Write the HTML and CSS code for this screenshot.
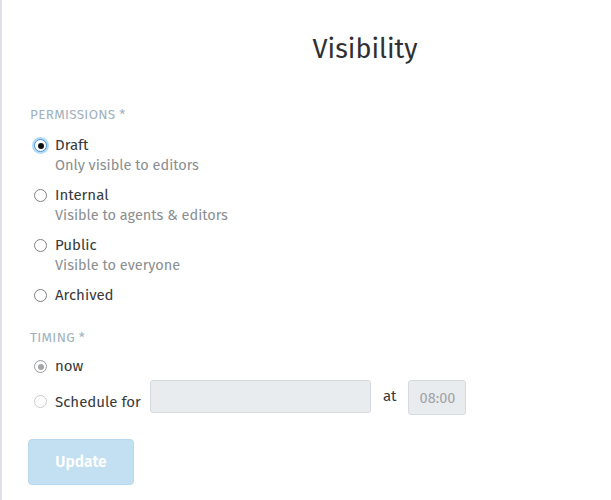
FILE: index.html
```html
<!DOCTYPE html>
<html lang="en">
<head>
  <meta charset="UTF-8" />
  <title>Visibility</title>
  <link rel="stylesheet" href="styles.css">
</head>
<body>
  <div class="modal">
    <h1 class="modal-title">Visibility</h1>

    <form class="form">
      <div class="group">
        <div class="group-label">Permissions *</div>

        <label class="option">
          <input type="radio" name="state" class="focused" checked />
          <span class="option-text">
            <span class="option-name">Draft</span>
            <span class="option-desc">Only visible to editors</span>
          </span>
        </label>

        <label class="option">
          <input type="radio" name="state" />
          <span class="option-text">
            <span class="option-name">Internal</span>
            <span class="option-desc">Visible to agents &amp; editors</span>
          </span>
        </label>

        <label class="option">
          <input type="radio" name="state" />
          <span class="option-text">
            <span class="option-name">Public</span>
            <span class="option-desc">Visible to everyone</span>
          </span>
        </label>

        <label class="option">
          <input type="radio" name="state" />
          <span class="option-text">
            <span class="option-name">Archived</span>
          </span>
        </label>
      </div>

      <div class="group">
        <div class="group-label">Timing *</div>

        <label class="option timing">
          <input type="radio" name="timing" checked disabled />
          <span class="option-name">now</span>
        </label>

        <div class="option schedule">
          <input type="radio" name="timing" disabled />
          <span class="option-name">Schedule for</span>
          <input type="text" class="date-input" disabled />
          <span class="at">at</span>
          <input type="text" class="time-input" value="08:00" disabled />
        </div>
      </div>

      <button type="submit" class="btn" disabled>Update</button>
    </form>
  </div>
</body>
</html>
```

FILE: styles.css
```css
body {
  margin: 0;
  font-family: 'Fira Sans', 'Open Sans', 'Noto Sans', sans-serif;
  color: #38393b;
  background-color: #fff;
}

.modal {
  min-height: 500px;
  box-sizing: border-box;
  border-left: 2px solid #dfe3e8;
  padding: 0 0 0 28px;
}

.modal-title {
  margin: 0;
  padding: 31px 0 0 145px;
  height: 49px;
  width: 380px;
  font-size: 27px;
  font-weight: 400;
  line-height: 36px;
  text-align: center;
  color: #2f3033;
}

.form {
  padding-top: 26px;
}

.group {
  margin-bottom: 24px;
}

.group-label {
  font-size: 13.5px;
  text-transform: uppercase;
  letter-spacing: 0.3px;
  color: #9fb1bd;
  line-height: 18px;
  margin-bottom: 11px;
}

.option {
  display: flex;
  align-items: flex-start;
  gap: 8px;
  padding-left: 4px;
  margin-bottom: 10px;
  font-size: 15px;
}

.option input[type="radio"] {
  appearance: none;
  -webkit-appearance: none;
  width: 13px;
  height: 13px;
  margin: 4px 0 0 0;
  flex-shrink: 0;
  box-sizing: border-box;
  border: 1px solid #7d7f82;
  border-radius: 50%;
  background-color: #fff;
  position: relative;
}

.option input[type="radio"]:checked::after {
  content: "";
  position: absolute;
  left: 2.5px;
  top: 2.5px;
  width: 6px;
  height: 6px;
  border-radius: 50%;
  background-color: #111;
}

.option input.focused {
  border-color: #4a90d9;
  box-shadow: 0 0 0 2px #b5dcf7;
}

.option input[type="radio"]:disabled {
  border-color: #c9cbcd;
}

.option input[type="radio"]:checked:disabled {
  border-color: #9c9ea0;
}

.option input[type="radio"]:checked:disabled::after {
  background-color: #a4a6a8;
}

.option-text {
  display: flex;
  flex-direction: column;
}

.option-name {
  line-height: 20px;
  color: #38393b;
}

.option-desc {
  font-size: 14.5px;
  line-height: 20px;
  color: #8a8e91;
}

.timing {
  margin-top: -2px;
  margin-bottom: 4px;
}

.schedule {
  gap: 0;
  margin-bottom: 0;
}

.schedule input[type="radio"] {
  margin-top: 15px;
}

.schedule .option-name {
  margin-left: 8px;
  padding-top: 12px;
  line-height: 21px;
}

.date-input,
.time-input {
  font-family: inherit;
  font-size: 14.5px;
  height: 33px;
  box-sizing: border-box;
  border: 1px solid #d6dadf;
  border-radius: 3px;
  background-color: #e9ecef;
  color: #a0a4a7;
}

.date-input {
  width: 221px;
  margin-left: 9px;
}

.at {
  margin: 0 12px;
  line-height: 33px;
}

.time-input {
  width: 58px;
  height: 35px;
  text-align: center;
  padding: 0;
}

.btn {
  margin: 0 0 0 -2px;
  width: 106px;
  height: 46px;
  border: 1px solid #b9d9ee;
  border-radius: 4px;
  background-color: #c3dff2;
  color: #fff;
  font-family: inherit;
  font-size: 15.5px;
  font-weight: 600;
}
```
